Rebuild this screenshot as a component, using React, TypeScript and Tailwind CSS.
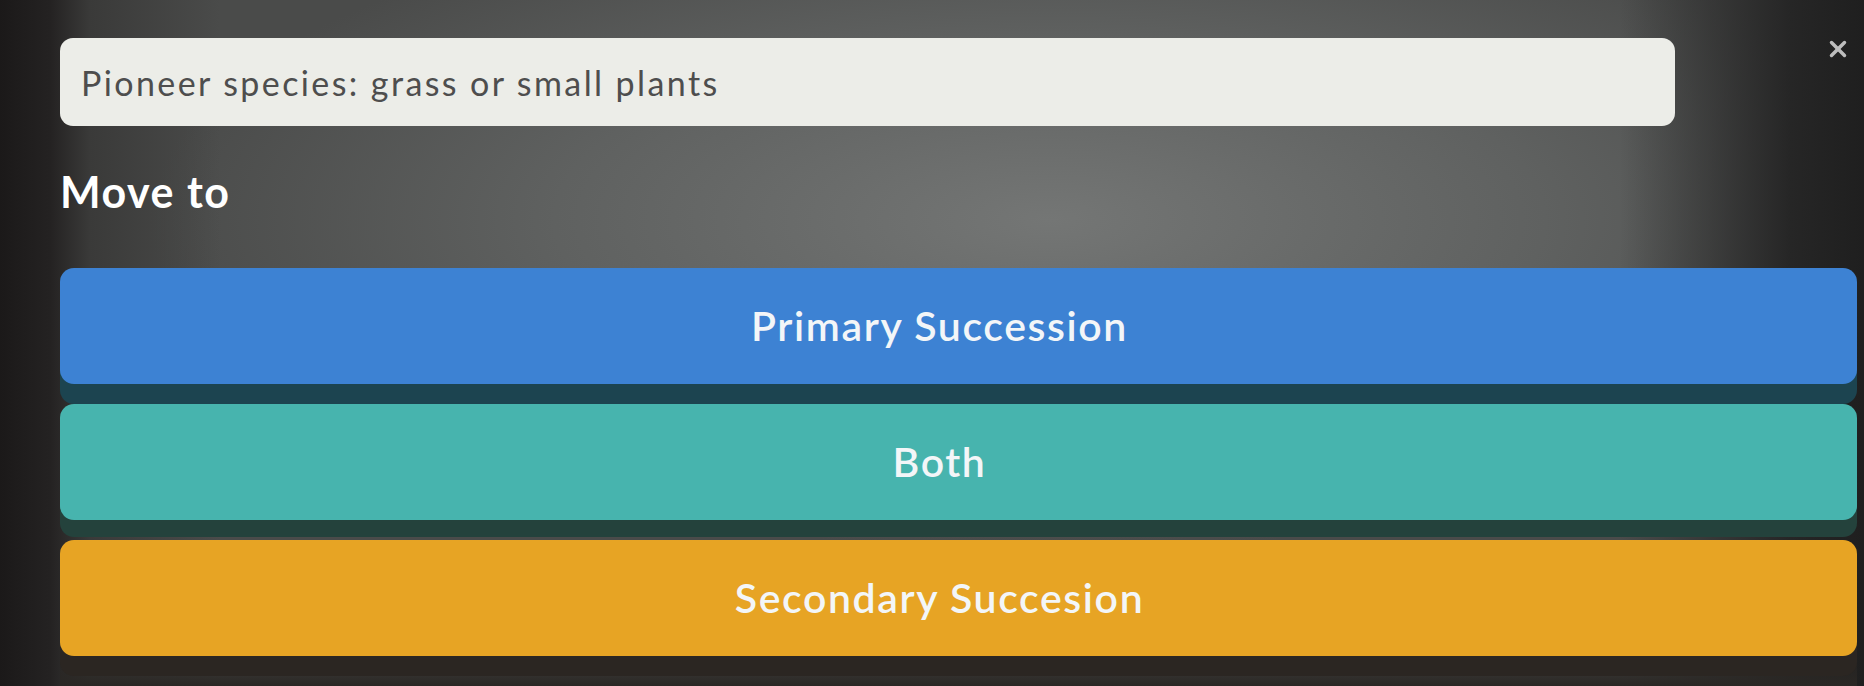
import React from 'react';
import { X } from 'lucide-react';

const options = [
  { id: 'primary', label: 'Primary Succession', color: 'bg-[#3d82d3]', strip: 'shadow-[0_20px_0_#1c4450]' },
  { id: 'both', label: 'Both', color: 'bg-[#47b4ae]', strip: 'shadow-[0_17px_0_#24423c]' },
  { id: 'secondary', label: 'Secondary Succesion', color: 'bg-[#e7a424]', strip: 'shadow-[0_20px_0_#2b2622]' },
];

const App: React.FC = () => {
  return (
    <div className="relative h-[686px] w-[1864px] overflow-hidden bg-[linear-gradient(to_right,#1b1919_0px,#242222_50px,#3a3a39_90px,transparent_220px,transparent_1620px,#262626_1790px,#1f1f1f_1864px),radial-gradient(ellipse_900px_330px_at_1050px_220px,#747675_0%,#5f6160_55%,#4a4b4a_100%)] pl-[60px] pr-[7px] pt-[38px] font-['Lato','Open_Sans',sans-serif]">
      <div className="flex items-start">
        <div className="flex h-[88px] w-[1615px] items-center rounded-[13px] bg-[#ecede8] pl-[21px] text-[34px] tracking-[2.4px] text-[#4e4e4e]">
          Pioneer species: grass or small plants
        </div>
        <button className="ml-auto mr-[6px] mt-[-2px] text-[#bdbdbd]" aria-label="Close">
          <X size={26} strokeWidth={3.2} />
        </button>
      </div>

      <h2 className="mt-[40px] text-[43px] font-bold leading-[52px] tracking-[1.5px] text-white">Move to</h2>

      <div className="mt-[50px] flex flex-col gap-[20px] pb-[30px] bg-[linear-gradient(to_bottom,transparent_90%,#2a2724_100%)]">
        {options.map((o) => (
          <button
            key={o.id}
            className={`flex h-[116px] w-full items-center justify-center rounded-[14px] pr-[38px] ${o.color} ${o.strip} text-[41px] font-semibold tracking-[1.6px] text-[#f3f6f8]`}
          >
            {o.label}
          </button>
        ))}
      </div>
    </div>
  );
};

export default App;
